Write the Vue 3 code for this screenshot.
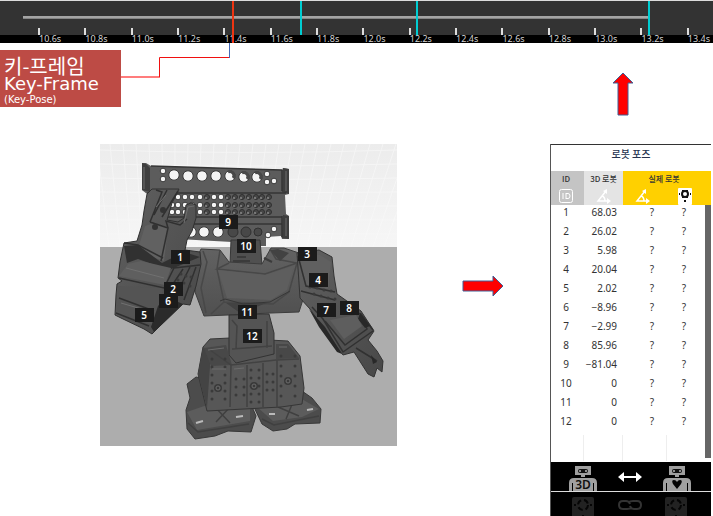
<script setup>
const times = Array.from({ length: 15 }, (_, i) => (10.6 + i * 0.2).toFixed(1) + 's')
const frames = [42.1, 58.4, 90.9]

const rows = [
  ['1', '68.03'], ['2', '26.02'], ['3', '5.98'], ['4', '20.04'],
  ['5', '2.02'], ['6', '−8.96'], ['7', '−2.99'], ['8', '85.96'],
  ['9', '−81.04'], ['10', '0'], ['11', '0'], ['12', '0'],
]

const joints = [
  [1, 171, 250], [2, 164, 282], [6, 159, 294], [3, 298, 247], [4, 309, 273], [5, 135, 308],
  [7, 317, 303], [8, 340, 301], [9, 219, 215], [10, 237, 239], [11, 238, 305], [12, 243, 329],
]

const bigHoles = [
  [174, 175], [188, 176], [202, 176], [216, 176], [230, 176], [244, 177], [257, 177],
  [191, 232], [204, 232], [218, 232],
]
const edgeHoles = [[163, 171], [163, 179], [267, 174], [267, 182], [274, 181], [274, 229], [268, 235]]
const grid = (xs, ys) => ys.flatMap((y) => xs.map((x) => [x, y]))
const openHoles = grid([172, 178, 185, 192, 200, 214, 221], [197, 205, 212])
const blindHoles = grid([207, 228, 235, 242, 249, 256, 262, 269], [197, 205, 212])
const bolts = [
  ...grid([212, 225], [359, 367, 375, 383, 391, 399]),
  ...grid([236, 244], [379, 387, 395]),
  ...grid([251, 259], [370, 378, 386, 394, 402]),
  ...grid([267, 273], [374, 382, 390]),
  ...grid([281, 295], [356, 366, 376, 386, 396]),
]
const armBolts = [
  [310, 287], [317, 288], [324, 290], [331, 291], [314, 294], [321, 296], [328, 298], [335, 299],
  [181, 274], [186, 276], [191, 277], [178, 280], [184, 283], [190, 286],
]
</script>

<template>
  <div class="page">
    <header class="timeline">
      <div class="track"></div>
      <ol class="scale">
        <li v-for="t in times" :key="t"><span>{{ t }}</span></li>
      </ol>
      <i v-for="f in frames" :key="f" class="frame" :style="{ left: f + '%' }"></i>
      <i class="playhead"></i>
    </header>

    <main class="stage">
      <section class="source">
        <div class="callout">
          <p class="ko">키-프레임</p>
          <p class="en">Key-Frame</p>
          <p class="sub">(Key-Pose)</p>
          <svg class="connector" viewBox="0 0 110 36" width="110" height="36" aria-hidden="true">
            <path d="M0 34H39" stroke="#ff7c7c" stroke-width="2" />
            <path d="M38.500 34V14.500H108" stroke="#f01010" fill="none" />
            <path d="M108.500 0V15" stroke="#4468b8" />
          </svg>
        </div>

        <svg class="robot" viewBox="100 144 297 302" role="img" aria-label="3D 로봇">
          <defs>
            <linearGradient id="wall" x2="0" y2="1">
              <stop offset="0" stop-color="#ececec" /><stop offset="1" stop-color="#f6f6f6" />
            </linearGradient>
            <linearGradient id="chest" x2="0" y2="1">
              <stop offset="0" stop-color="#626262" /><stop offset="1" stop-color="#505050" />
            </linearGradient>
            <linearGradient id="limb" x2="1" y2="1">
              <stop offset="0" stop-color="#606060" /><stop offset="1" stop-color="#484848" />
            </linearGradient>
          </defs>
          <rect x="100" y="144" width="297" height="103" fill="url(#wall)" />
          <g stroke="#fafafa" stroke-width="1" opacity="0.6">
            <path v-for="n in 26" :key="n" :d="`M${84 + n * 13} 144L${98 + n * 11} 247`" />
            <path v-for="n in 8" :key="'h' + n" :d="`M100 ${136 + n * 14}Q250 ${142 + n * 13} 397 ${136 + n * 14}`" fill="none" />
          </g>
          <rect x="100" y="247" width="297" height="199" fill="#adadad" />

          <!-- perforated head board -->
          <path d="M142 163L146 163 151 166 282 170 283 168 289 169 289 194 285 195 286 214 289 216 289 239 282 239 281 236 266 237 266 246 260 246 260 242 232 242 160 238 147 194 142 190Z" fill="#5c5c5c" />
          <path d="M142 163L146 164 150 168 150 192 142 190ZM283 168L289 169 289 194 282 192ZM283 215L289 216 289 239 282 238Z" fill="#3e3e3e" />
          <path d="M147 193H286M160 217H282M151 166L282 170M170 224H282M282 170V191M282 216V237" stroke="#343434" stroke-width="1.500" fill="none" />
          <path d="M144 167V189M286 171V191M286 218V236" stroke="#6c6c6c" />
          <g fill="#f4f4f4" stroke="#3a3a3a">
            <circle v-for="(h, i) in bigHoles" :key="i" :cx="h[0]" :cy="h[1]" r="5.200" />
            <circle v-for="(h, i) in edgeHoles" :key="'e' + i" :cx="h[0]" :cy="h[1]" r="2.800" />
            <circle v-for="(h, i) in openHoles" :key="'o' + i" :cx="h[0]" :cy="h[1]" r="2.800" />
          </g>
          <g fill="none" stroke="#484848" stroke-width="3">
            <path d="M228 172A4 4 0 0 1 233 178M242 173A4 4 0 0 1 247 179M255 173A4 4 0 0 1 260 179" />
          </g>
          <g fill="#484848" stroke="#303030">
            <circle v-for="(h, i) in blindHoles" :key="i" :cx="h[0]" :cy="h[1]" r="2.500" />
            <circle cx="233" cy="232" r="5" /><circle cx="246" cy="232" r="5" /><circle cx="258" cy="232" r="4" />
          </g>
          <g fill="#8a8a8a">
            <circle v-for="(h, i) in blindHoles" :key="i" :cx="h[0] - 1" :cy="h[1] + 1" r="1" />
          </g>

          <!-- neck and torso -->
          <path d="M231 240L260 240 262 265 230 265Z" fill="#505050" stroke="#373737" />
          <path d="M201 249L220 250 229 262 262 264 271 248 284 248 299 253 306 290 299 312 271 313 228 315 204 316 195 292 196 260Z" fill="url(#chest)" stroke="#3c3c3c" />
          <path d="M220 250L217 269 224 302 211 314M229 263L217 269 265 274 297 263M270 249L276 259 297 263 289 292 273 304 224 302M203 251L207 262 201 288 206 313" fill="none" stroke="#484848" stroke-width="1.500" />
          <path d="M218 270L265 275 294 266 287 290 271 300 227 298Z" fill="#5e5e5e" />
          <path d="M270 250L278 249 289 253 280 261ZM226 303L240 313 267 303 256 303Z" fill="#424242" />
          <path d="M220 301L225 299 243 304 270 302 290 291" fill="none" stroke="#373737" />
          <path d="M233 261H250M237 257H246M264 258L272 262" stroke="#3b3b3b" stroke-width="2" />

          <!-- raised arm -->
          <path d="M147 194L152 189 179 189 172 203 167 220 178 222 184 218 186 205 191 203 196 205 196 218 192 231 187 240 185 250 200 252 201 264 196 286 190 305 183 304 160 326 152 334 144 329 121 318 115 315 116 295 117 284 122 281 118 278 120 262 124 243 137 241 142 225 144 211Z" fill="url(#limb)" stroke="#303030" />
          <path d="M154 223L168 227 164 261 137 252 145 226Z" fill="#616161" />
          <path d="M124 246L138 245 162 263 184 252 200 257 169 270 138 259 127 263Z" fill="#313131" />
          <path d="M128 264L141 261 171 268 165 285 119 276Z" fill="#5f5f5f" />
          <path d="M118 286L163 288 160 305 152 325 117 311Z" fill="#545454" />
          <path d="M151 327L158 306 166 297 183 304 154 332Z" fill="#2b2b2b" />
          <path d="M156 190L162 192 150 222M167 190L154 215M178 191L162 217M150 222L168 228 161 261M168 228L166 221 180 225 187 219M124 243L138 245 163 258M119 278L164 288 174 268 200 265M119 298L154 311M116 313L149 326M183 269L171 287M190 267L178 291M196 267L184 300" fill="none" stroke="#303030" stroke-width="1.500" />
          <path d="M184 223L188 207 194 206M156 207L166 195M126 268L164 278M121 303L145 310" fill="none" stroke="#707070" />
          <circle cx="163" cy="210" r="3" fill="#333" /><circle cx="155" cy="227" r="3" fill="#333" />

          <!-- lowered arm -->
          <path d="M297 253L319 250 332 257 334 276 337 294 361 311 374 331 368 340 377 351 383 361 382 372 377 368 374 377 368 374 354 352 343 355 326 333 310 309 300 298Z" fill="url(#limb)" stroke="#333" />
          <path d="M299 254L320 255 331 262 328 289 306 285Z" fill="#606060" />
          <path d="M301 291L335 300M298 256L306 286 335 292M312 307L323 319 343 352 373 331M341 309L361 314 367 329 345 345 325 321M356 348L377 361M361 314L373 330" fill="none" stroke="#313131" stroke-width="1.500" />
          <path d="M309 309L325 327 342 354 337 352 319 327ZM360 313L370 326 365 328 358 319ZM371 355L377 362 373 364Z" fill="#282828" />
          <path d="M330 320L356 315 362 326 344 339Z" fill="#5e5e5e" />

          <!-- feet -->
          <path d="M187 384L196 377 205 379 214 396 250 402 256 416 251 432 228 431 215 436 195 439 187 429 186 410 190 398Z" fill="#4c4c4c" stroke="#383838" />
          <path d="M253 405L302 391 312 398 321 409 320 423 295 424 287 429 273 431 262 424Z" fill="#4c4c4c" stroke="#383838" />
          <path d="M187 412L210 404 250 408 250 421 197 430ZM257 407L300 398 319 409 302 417 273 421Z" fill="#5c5c5c" />
          <path d="M188 423L198 432 249 424M262 419L274 425 319 416M215 407L230 423M230 407L216 422M278 407L299 416M293 402L286 419" fill="none" stroke="#404040" stroke-width="1.500" />
          <path d="M196 423L203 421M236 417L243 416M269 414L275 414M307 410L313 409" stroke="#bbb" stroke-width="2" />

          <!-- waist and hips -->
          <path d="M210 339L230 338 288 341 300 356 304 388 302 404 281 407 207 411 198 374 203 347Z" fill="#575757" stroke="#363636" />
          <path d="M229 315L269 314 274 333 274 354 236 363 229 355Z" fill="#545454" stroke="#333" />
          <path d="M203 347L198 374 207 408 211 352Z" fill="#444" />
          <path d="M204 348L226 345 232 365 211 366ZM276 344L288 344 299 358 276 359Z" fill="#484848" />
          <path d="M210 350L231 365 276 360 299 359M231 365L230 407M247 365V407M263 363V407M277 360V407M232 349L272 346M232 320L237 326 236 349M267 321V348" fill="none" stroke="#424242" stroke-width="1.500" />
          <g fill="#3a3a3a">
            <circle v-for="(b, i) in bolts" :key="i" :cx="b[0]" :cy="b[1]" r="1.500" />
            <circle v-for="(b, i) in armBolts" :key="'a' + i" :cx="b[0]" :cy="b[1]" r="1.500" />
            <circle cx="218" cy="388" r="4" /><circle cx="254" cy="386" r="4" /><circle cx="288" cy="381" r="4" />
          </g>
          <g fill="none" stroke="#6c6c6c">
            <circle cx="218" cy="388" r="2" /><circle cx="254" cy="386" r="2" /><circle cx="288" cy="381" r="2" />
            <path d="M208 350L224 348M279 347L287 347M212 369L226 369M234 369L244 368" />
          </g>

          <g v-for="[id, x, y] in joints" :key="id">
            <rect :x="x" :y="y" width="19" height="14" fill="#1b1b1b" />
            <text class="joint" :x="x + 9" :y="y + 11">{{ id }}</text>
          </g>
        </svg>
      </section>

      <div class="step">
        <svg viewBox="0 0 42 22" width="42" height="22" aria-hidden="true">
          <path d="M1 6H31V1L41 11 31 21V16H1Z" fill="#f00" stroke="#3f5f96" />
        </svg>
      </div>

      <section class="result">
        <svg class="up" viewBox="0 0 22 44" width="22" height="44" aria-hidden="true">
          <path d="M11 1L21 11H16V43H6V11H1Z" fill="#f00" stroke="#3f5f96" />
        </svg>

        <div class="panel">
          <h2>로봇 포즈</h2>
          <div class="list">
            <table>
              <colgroup><col class="c1" /><col class="c2" /><col class="c3" /><col class="c4" /></colgroup>
              <thead>
                <tr>
                  <th class="g1">ID</th><th class="g2">3D 로봇</th><th class="g3" colspan="2">실제 로봇</th>
                </tr>
                <tr class="icons">
                  <td class="g1">
                    <svg viewBox="0 0 16 16" width="16" height="16">
                      <rect x="1.500" y="1.500" width="13" height="13" rx="2" fill="none" stroke="#fff" />
                      <path d="M5 5V11M8 5V11M8 5.500H10Q12 5.500 12 8T10 10.500H8" fill="none" stroke="#fff" />
                    </svg>
                  </td>
                  <td class="g2">
                    <svg viewBox="0 0 16 16" width="16" height="16">
                      <path d="M10 3L2 13H13M6 8Q9 9 9 13" fill="none" stroke="#fff" stroke-width="1.500" />
                      <path d="M11 1V6L7 3ZM11 10L15 13 11 16Z" fill="#fff" />
                    </svg>
                  </td>
                  <td class="g3">
                    <svg viewBox="0 0 16 16" width="16" height="16">
                      <path d="M10 3L2 13H13M6 8Q9 9 9 13" fill="none" stroke="#fff" stroke-width="1.500" />
                      <path d="M11 1V6L7 3ZM11 10L15 13 11 16Z" fill="#fff" />
                    </svg>
                  </td>
                  <td class="g3 last">
                    <svg viewBox="0 0 14 17" width="14" height="17">
                      <rect width="14" height="17" rx="1" fill="#fff" />
                      <circle cx="7" cy="6" r="3" fill="none" stroke="#111" stroke-width="2" />
                      <path d="M4 2H6V4H4ZM8 2H10V4H8ZM4 8H6V10H4ZM8 8H10V10H8ZM1 5H2V7H1ZM12 5H13V7H12ZM6 12H8V14H6Z" fill="#111" />
                    </svg>
                  </td>
                </tr>
              </thead>
              <tbody>
                <tr v-for="[id, angle] in rows" :key="id">
                  <td class="id">{{ id }}</td><td class="angle">{{ angle }}</td>
                  <td class="q1">?</td><td class="q2">?</td>
                </tr>
                <tr class="blank"><td></td><td></td><td></td><td></td></tr>
              </tbody>
            </table>
            <div class="scrollbar"></div>
          </div>
          <div class="bar">
            <svg viewBox="0 0 28 26" width="28" height="26" aria-label="3D">
              <path d="M6 1H22V10H16V12H12V10H6ZM5 13H23Q28 13 28 18V26H25V18H24V26H4V18H3V26H0V18Q0 13 5 13Z" fill="#a0a0a0" />
              <rect x="9" y="4" width="10" height="4" rx="2" fill="#111" />
              <circle cx="11" cy="6" r="1" fill="#bbb" /><circle cx="17" cy="6" r="1" fill="#bbb" />
              <text x="14" y="24" class="three">3D</text>
            </svg>
            <svg viewBox="0 0 26 12" width="26" height="12" aria-hidden="true">
              <path d="M1 6L7 1V5H19V1L25 6 19 11V7H7V11Z" fill="#fff" />
            </svg>
            <svg viewBox="0 0 28 26" width="28" height="26" aria-hidden="true">
              <path d="M6 1H22V10H16V12H12V10H6ZM5 13H23Q28 13 28 18V26H25V18H24V26H4V18H3V26H0V18Q0 13 5 13Z" fill="#a0a0a0" />
              <rect x="9" y="4" width="10" height="4" rx="2" fill="#111" />
              <circle cx="11" cy="6" r="1" fill="#bbb" /><circle cx="17" cy="6" r="1" fill="#bbb" />
              <path d="M14 24L10 19Q8 15 11 15 13 15 14 17 15 15 17 15 20 15 18 19Z" fill="#050505" />
            </svg>
          </div>
          <div class="bar dim">
            <svg viewBox="0 0 22 20" width="22" height="20" aria-hidden="true">
              <rect width="22" height="24" rx="2" fill="#222" />
              <circle cx="11" cy="8" r="5" fill="none" stroke="#050505" stroke-width="2" stroke-dasharray="5 3" />
              <path d="M2 7H4V9H2ZM18 7H20V9H18ZM10 18H12V20H10Z" fill="#050505" />
            </svg>
            <svg viewBox="0 0 26 12" width="26" height="12" aria-hidden="true">
              <path d="M15 8.500Q13 10 10 10H6Q2 10 2 6T6 2H9Q12 2 13 5M11 3.500Q13 2 16 2H20Q24 2 24 6T20 10H17Q14 10 13 7" fill="none" stroke="#333" stroke-width="2" />
            </svg>
            <svg viewBox="0 0 22 20" width="22" height="20" aria-hidden="true">
              <rect width="22" height="24" rx="2" fill="#222" />
              <circle cx="11" cy="8" r="5" fill="none" stroke="#050505" stroke-width="2" stroke-dasharray="5 3" />
              <path d="M2 7H4V9H2ZM18 7H20V9H18ZM10 18H12V20H10Z" fill="#050505" />
            </svg>
          </div>
        </div>
      </section>
    </main>
  </div>
</template>

<style>
body { margin: 0; background: #fff; }
</style>

<style scoped>
.page { font-family: "Noto Sans", "Noto Sans CJK KR", sans-serif; color: #333; overflow-x: clip; }
p, h2, ol { margin: 0; padding: 0; }
svg { display: block; }

.timeline {
  position: relative;
  box-sizing: border-box;
  height: 43px;
  padding-top: 15px;
  border-top: 1px solid #ddd;
  background: linear-gradient(#333 34px, #000 34px);
}
.track {
  position: relative;
  height: 3px;
  margin-left: 23px;
  width: 88%;
  box-sizing: border-box;
  background: #a5a5a5;
  border-bottom: 1px solid #858585;
}
.track::after {
  content: "";
  position: absolute;
  right: 0;
  top: -3px;
  width: 2px;
  height: 9px;
  background: #a5a5a5;
}
.scale {
  display: grid;
  grid-template-columns: repeat(15, 6.5%);
  margin: 9px 0 0 38px;
  list-style: none;
  width: 100%;
}
.scale li::before {
  content: "";
  display: block;
  width: 2px;
  height: 7px;
  background: #ddd;
}
.scale span {
  display: block;
  margin: -2px 0 0 1px;
  font-size: 9px;
  line-height: 12px;
  color: #d2d2d2;
}
.frame, .playhead { position: absolute; top: 0; width: 2px; height: 34px; background: #00cdd2; }
.playhead { left: 32.500%; height: 42px; background: #ee3512; }

.stage { display: grid; grid-template-columns: 397fr 153fr 163fr; }
.source { padding-top: 7px; }
.callout {
  position: relative;
  box-sizing: border-box;
  width: 121px;
  height: 57px;
  padding: 6px 0 0 4px;
  background: #bd4b45;
  color: #fff;
}
.connector { position: absolute; left: 100%; top: -7px; }
.ko { font: 20px/20px "Noto Sans CJK KR", sans-serif; }
.en { font: 18px/16px "DejaVu Sans", sans-serif; }
.sub { font: 10px/15px "DejaVu Sans", sans-serif; }
.robot { box-sizing: border-box; width: 100%; height: auto; margin-top: 37px; padding-left: 100px; }
.joint { font: 600 10px "Noto Sans", sans-serif; fill: #fff; text-anchor: middle; }
.three { font: 600 12px "Noto Sans", sans-serif; fill: #111; stroke: #a0a0a0; stroke-width: 2px; paint-order: stroke; text-anchor: middle; }

.step { display: flex; justify-content: center; padding: 232px 0 0 18px; align-items: flex-start; }
.result { padding: 29px 2px 0 0; }
.up { margin-left: 62px; }
.panel { margin-top: 28px; border-left: 1px solid #555; }
h2 {
  height: 27px;
  border-top: 1px solid #333;
  box-sizing: border-box;
  font: 500 10px/18px "Noto Sans CJK KR", sans-serif;
  color: #26334f;
  text-align: center;
}
.list { position: relative; }
table { width: 100%; border-collapse: collapse; table-layout: fixed; }
th, td { padding: 0; }
.c1 { width: 33px; }
.c2 { width: 39px; }
th { height: 16px; font: 500 8px/16px "Noto Sans CJK KR", sans-serif; color: #333; white-space: nowrap; }
.g1 { background: #c4c4c4; }
.g2 { background: #e4e4e4; }
.g3 { background: #ffd000; }
th.g1, .icons .g1 { padding-right: 3px; }
th.g3 { padding-right: 6px; }
.icons td { height: 18px; }
.icons svg { margin: 0 auto; }
.icons td.g3 { padding-right: 4px; }
.icons td.last { padding-right: 8px; }
tbody td { height: 19px; vertical-align: top; font-size: 10px; line-height: 15px; text-align: center; }
tbody .id { padding-right: 3px; }
tbody .angle { padding-right: 6px; text-align: right; }
tbody .q1 { padding-left: 14px; }
tbody .q2 { padding-right: 10px; }
.blank td {
  height: 29px;
  background: linear-gradient(#eee, #eee) right / 1px 26px no-repeat;
}
.blank td:last-child { background: none; }
.scrollbar { position: absolute; right: 0; top: 34px; bottom: 4px; width: 6px; background: #666; }
.bar {
  display: flex;
  justify-content: space-between;
  align-items: flex-end;
  height: 30px;
  padding: 0 20px 0 18px;
  box-sizing: border-box;
  background: #000;
  border-bottom: 1px solid #ddd;
}
.bar > :nth-child(2) { align-self: center; }
.dim { height: 25px; padding: 0 24px 0 21px; border: 0; }
</style>
